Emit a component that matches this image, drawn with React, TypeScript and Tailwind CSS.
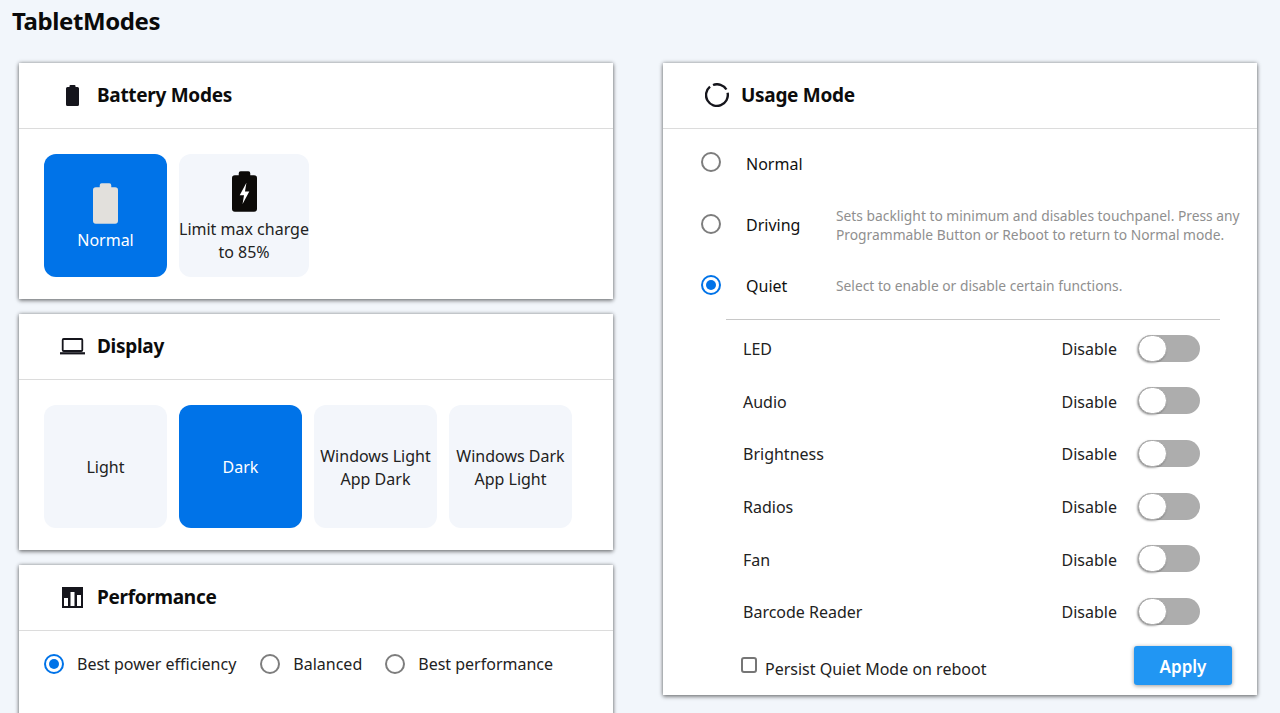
import React from "react";

const font = "font-['Noto_Sans','Open_Sans',sans-serif]";

function Card({ icon, title, children, className = "" }: { icon: React.ReactNode; title: string; children: React.ReactNode; className?: string }) {
  return (
    <section className={`w-[594px] shrink-0 bg-white shadow-[0_0_4px_rgba(0,0,0,0.4),0_2px_4px_rgba(0,0,0,0.35)] ${className}`}>
      <header className="flex h-[66px] items-center border-b border-[#dcdcdc]">
        <div className="flex w-[78px] justify-center pl-[28px] pr-0">{icon}</div>
        <h2 className="text-[19px] font-bold leading-none tracking-[-0.3px] text-[#0c0c0c]">{title}</h2>
      </header>
      {children}
    </section>
  );
}

function Tile({ active, w = "w-[123px]", className = "", children }: { active?: boolean; w?: string; className?: string; children: React.ReactNode }) {
  return (
    <div className={`flex h-[123px] ${w} flex-col items-center justify-center rounded-[12px] text-center text-[16px] leading-[23px] ${active ? "bg-[#0073e8] text-white" : "bg-[#f3f6fb] text-[#222]"} ${className}`}>
      {children}
    </div>
  );
}

function Radio({ on, className = "" }: { on?: boolean; className?: string }) {
  return (
    <span className={`flex h-[20px] w-[20px] shrink-0 items-center justify-center rounded-full border-[2.5px] ${on ? "border-[#0073e8]" : "border-[#7d7d7d]"} ${className}`}>
      {on && <span className="h-[10px] w-[10px] rounded-full bg-[#0073e8]" />}
    </span>
  );
}

function ToggleRow({ label }: { label: string }) {
  return (
    <div className="flex h-[52.6px] items-center pl-[80px] pr-[57px] text-[16px] text-[#222]">
      <span className="flex-1 -translate-y-[1px]">{label}</span>
      <span className="mr-[21px] -translate-y-[1.5px]">Disable</span>
      <span className="relative h-[27px] w-[62px] -translate-y-[2px] rounded-full bg-[#adadad]">
        <span className="absolute left-0 top-0 h-[27px] w-[29px] rounded-full border border-[#aaa] bg-white shadow-[-1px_1px_2px_rgba(0,0,0,0.35)]" />
      </span>
    </div>
  );
}

const BatteryFill = ({ fill, w, h, bolt }: { fill: string; w: number; h: number; bolt?: boolean }) => (
  <svg width={w} height={h} viewBox="0 0 26 42">
    <path d="M9 0h8a2 2 0 0 1 2 2v2h4a3 3 0 0 1 3 3v32a3 3 0 0 1-3 3H3a3 3 0 0 1-3-3V7a3 3 0 0 1 3-3h4V2a2 2 0 0 1 2-2z" fill={fill} />
    {bolt && <path d="M15 12l-7 13h4.5L11 34l7-13h-4.5z" fill="#fff" />}
  </svg>
);

export default function App() {
  return (
    <div className={`h-[713px] w-[1280px] overflow-hidden bg-[#f2f6fb] ${font}`}>
      <h1 className="h-[63px] pl-[12px] pt-[4px] text-[24px] font-bold leading-[34px] tracking-[-0.4px] text-[#0a0a0a]">TabletModes</h1>
      <div className="flex items-start gap-[50px] pl-[19px]">
        <div className="flex w-[594px] flex-col gap-[15px]">
          <Card title="Battery Modes" icon={<BatteryFill fill="#15151c" w={13} h={21} />}>
            <div className="flex gap-[12px] px-[25px] pb-[22px] pt-[25px]">
              <Tile active className="pt-[4px]">
                <BatteryFill fill="#e2e0dc" w={25} h={41} />
                <span className="mt-[5px]">Normal</span>
              </Tile>
              <Tile w="w-[130px]" className="pt-[4px]">
                <BatteryFill fill="#0c0a08" w={25} h={41} bolt />
                <span className="mt-[6px] whitespace-nowrap">Limit max charge<br />to 85%</span>
              </Tile>
            </div>
          </Card>
          <Card title="Display" icon={
            <svg width="25" height="17" viewBox="0 0 25 17" fill="none" stroke="#15151c">
              <rect x="2.7" y="1" width="19.6" height="12" rx="1" strokeWidth="1.8" />
              <path d="M0 15.3h25" strokeWidth="2.2" />
            </svg>
          }>
            <div className="flex gap-[12px] px-[25px] pb-[22px] pt-[25px]">
              <Tile className="pt-[2px]">Light</Tile>
              <Tile active className="pt-[2px]">Dark</Tile>
              <Tile className="pt-[2px]">Windows Light<br />App Dark</Tile>
              <Tile className="pt-[2px]">Windows Dark<br />App Light</Tile>
            </div>
          </Card>
          <Card title="Performance" icon={
            <svg width="21" height="21" viewBox="0 0 21 21">
              <path fillRule="evenodd" fill="#15151c" d="M0 0h21v21H0zM2 11v8h4v-8zM8.5 5v14h4V5zM15 8v11h4V8z" />
            </svg>
          }>
            <div className="flex h-[90px] items-start pl-[25px] pt-[21px] text-[16px] text-[#222]">
              <span className="flex items-center"><Radio on /><span className="ml-[13px]">Best power efficiency</span></span>
              <span className="ml-[24px] flex items-center"><Radio /><span className="ml-[13px]">Balanced</span></span>
              <span className="ml-[23px] flex items-center"><Radio /><span className="ml-[13px]">Best performance</span></span>
            </div>
          </Card>
        </div>
        <Card title="Usage Mode" className="h-[632px]" icon={
          <svg width="24" height="24" viewBox="0 0 24 24" fill="none" stroke="#15151c" strokeWidth="2.4" className="-translate-y-[1px] translate-x-[1px]">
            <path d="M22.6 9.8A10.9 10.9 0 1 1 5 3.6" />
            <path d="M8 2A10.9 10.9 0 0 1 21.4 6.5" />
          </svg>
        }>
          <div className="pt-[4px]">
            <div className="flex h-[61px] items-center pl-[38px] text-[16px] text-[#111]">
              <Radio className="-translate-y-[2px]" /><span className="ml-[25px]">Normal</span>
            </div>
            <div className="flex h-[61px] items-center pl-[38px] text-[16px] text-[#111]">
              <Radio className="-translate-y-[1px]" /><span className="ml-[25px] w-[90px]">Driving</span>
              <p className="w-[410px] whitespace-nowrap text-[13.8px] leading-[19px] text-[#8f8f8f]">Sets backlight to minimum and disables touchpanel. Press any<br />Programmable Button or Reboot to return to Normal mode.</p>
            </div>
            <div className="flex h-[61px] items-center pl-[38px] text-[16px] text-[#111]">
              <Radio on className="-translate-y-[1px]" /><span className="ml-[25px] w-[90px]">Quiet</span>
              <p className="text-[13.8px] leading-[19px] text-[#8f8f8f]">Select to enable or disable certain functions.</p>
            </div>
            <div className="ml-[63px] mr-[37px] mb-[4px] mt-[3px] border-t border-[#c8c8c8]" />
            {["LED", "Audio", "Brightness", "Radios", "Fan", "Barcode Reader"].map((l) => <ToggleRow key={l} label={l} />)}
            <div className="flex items-center justify-between pl-[78px] pr-[25px] pt-[6px] text-[16px] text-[#222]">
              <span className="flex items-center">
                <span className="h-[16px] w-[16px] rounded-[3px] border-2 border-[#767676] bg-white" />
                <span className="ml-[8px] translate-y-[3.5px]">Persist Quiet Mode on reboot</span>
              </span>
              <button className="h-[39px] w-[98px] rounded-[3px] bg-[#2196f3] pt-[3px] text-[17px] font-semibold text-white shadow-[0_1px_4px_rgba(0,0,0,0.4)]">Apply</button>
            </div>
          </div>
        </Card>
      </div>
    </div>
  );
}
